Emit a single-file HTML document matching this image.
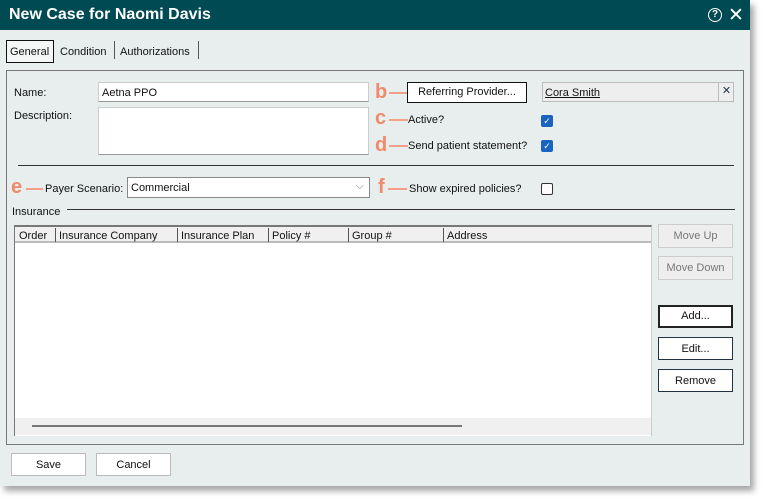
<!DOCTYPE html>
<html><head><style>
*{box-sizing:border-box;margin:0;padding:0}
body{width:765px;height:500px;background:#fff;font-family:"Liberation Sans",sans-serif;font-size:11px;color:#111;position:relative;overflow:hidden}
.a{position:absolute}
.dlg{left:0;top:0;width:750px;height:486px;background:#e8eded;box-shadow:4px 5px 6px rgba(0,0,0,.35)}
.title{left:0;top:0;width:750px;height:30px;background:#004a53;color:#fff;font-weight:bold;font-size:16px;padding:6px 0 0 9px}
.inp{background:#fff;border:1px solid #ccc;border-bottom:1px solid #999}
.btn{background:#fff;border:1px solid #9aa;text-align:center;line-height:22px}
.cb{width:12px;height:12px;background:#1a64c0;border-radius:2px;color:#fff;font-size:9px;text-align:center;line-height:12px}
.or{color:#f08a6a;font-size:20px;line-height:19px;font-weight:bold}
.ln{height:2px;background:#f4a088}
.hr{height:1px;background:#333}
</style></head><body>
<div class="a dlg"></div>
<div class="a title">New Case for Naomi Davis</div>
<div class="a" style="left:708px;top:8px;width:14px;height:14px;border:1.5px solid #fff;border-radius:50%;color:#fff;font-size:10px;text-align:center;line-height:11px;font-weight:bold">?</div>
<div class="a" style="left:728px;top:4px;color:#fff;font-size:19px">✕</div>
<div class="a" style="left:6px;top:40px;width:48px;height:23px;border:1px solid #111;background:#f4f6f6;padding:5px 0 0 3px">General</div>
<div class="a" style="left:60px;top:46px">Condition</div>
<div class="a" style="left:114px;top:41px;width:1px;height:18px;background:#555"></div>
<div class="a" style="left:120px;top:46px">Authorizations</div>
<div class="a" style="left:198px;top:41px;width:1px;height:18px;background:#555"></div>
<div class="a" style="left:6px;top:70px;width:738px;height:375px;border:1px solid #777"></div>
<div class="a" style="left:14px;top:87px">Name:</div>
<div class="a" style="left:14px;top:110px">Description:</div>
<div class="a inp" style="left:98px;top:82px;width:271px;height:20px;padding:4px 0 0 3px">Aetna PPO</div>
<div class="a inp" style="left:98px;top:107px;width:271px;height:48px"></div>
<div class="a hr" style="left:18px;top:165px;width:716px"></div>
<div class="a or" style="left:375px;top:83px">b</div><div class="a ln" style="left:389px;top:92px;width:18px"></div>
<div class="a btn" style="left:407px;top:82px;width:120px;height:21px;border-color:#111;line-height:19px">Referring Provider...</div>
<div class="a" style="left:542px;top:82px;width:192px;height:20px;background:#eee;border:1px solid #bbb;padding:4px 0 0 2px;text-decoration:underline">Cora Smith</div>
<div class="a" style="left:718px;top:82px;width:16px;height:20px;border-left:1px solid #bbb;color:#234;text-align:center;line-height:19px">✕</div>
<div class="a or" style="left:375px;top:109px">c</div><div class="a ln" style="left:389px;top:119px;width:19px"></div>
<div class="a" style="left:408px;top:114px">Active?</div>
<div class="a cb" style="left:541px;top:115px">✓</div>
<div class="a or" style="left:375px;top:136px">d</div><div class="a ln" style="left:389px;top:145px;width:19px"></div>
<div class="a" style="left:408px;top:140px">Send patient statement?</div>
<div class="a cb" style="left:541px;top:140px">✓</div>
<div class="a or" style="left:11px;top:178px">e</div><div class="a ln" style="left:26px;top:188px;width:17px"></div>
<div class="a" style="left:45px;top:183px">Payer Scenario:</div>
<div class="a" style="left:127px;top:177px;width:243px;height:21px;background:#fff;border:1px solid #888;padding:4px 0 0 3px">Commercial<span style="position:absolute;right:5px;top:2px;color:#777">⌵</span></div>
<div class="a or" style="left:378px;top:178px">f</div><div class="a ln" style="left:388px;top:188px;width:19px"></div>
<div class="a" style="left:409px;top:183px">Show expired policies?</div>
<div class="a" style="left:541px;top:183px;width:12px;height:12px;border:1px solid #333;border-radius:2px;background:#fff"></div>
<div class="a" style="left:12px;top:206px">Insurance</div>
<div class="a hr" style="left:67px;top:209px;width:668px"></div>
<div class="a" style="left:14px;top:225px;width:638px;height:211px;background:#fff;border-left:1px solid #777;border-top:2px solid #777;border-right:1px solid #ccc"></div>
<div class="a" style="left:15px;top:227px;width:636px;height:16px;background:#f0f0f0;border-bottom:2px solid #bbb"></div>
<div class="a" style="left:19px;top:230px">Order</div>
<div class="a" style="left:55px;top:228px;width:1px;height:14px;background:#555"></div><div class="a" style="left:59px;top:230px">Insurance Company</div>
<div class="a" style="left:177px;top:228px;width:1px;height:14px;background:#555"></div><div class="a" style="left:181px;top:230px">Insurance Plan</div>
<div class="a" style="left:268px;top:228px;width:1px;height:14px;background:#555"></div><div class="a" style="left:272px;top:230px">Policy #</div>
<div class="a" style="left:348px;top:228px;width:1px;height:14px;background:#555"></div><div class="a" style="left:352px;top:230px">Group #</div>
<div class="a" style="left:443px;top:228px;width:1px;height:14px;background:#555"></div><div class="a" style="left:447px;top:230px">Address</div>
<div class="a" style="left:15px;top:418px;width:636px;height:17px;background:#f0f0f0"></div>
<div class="a" style="left:32px;top:425px;width:430px;height:2px;background:#777"></div>
<div class="a btn" style="left:658px;top:224px;width:75px;height:24px;background:#eee;border-color:#ccc;color:#777">Move Up</div>
<div class="a btn" style="left:658px;top:256px;width:75px;height:24px;background:#eee;border-color:#ccc;color:#777">Move Down</div>
<div class="a btn" style="left:658px;top:305px;width:75px;height:23px;border:2px solid #222;line-height:19px">Add...</div>
<div class="a btn" style="left:658px;top:337px;width:75px;height:23px;border-color:#234">Edit...</div>
<div class="a btn" style="left:658px;top:369px;width:75px;height:23px;border-color:#234">Remove</div>
<div class="a btn" style="left:11px;top:453px;width:75px;height:23px;border-color:#bbb">Save</div>
<div class="a btn" style="left:96px;top:453px;width:75px;height:23px;border-color:#bbb">Cancel</div>
</body></html>
